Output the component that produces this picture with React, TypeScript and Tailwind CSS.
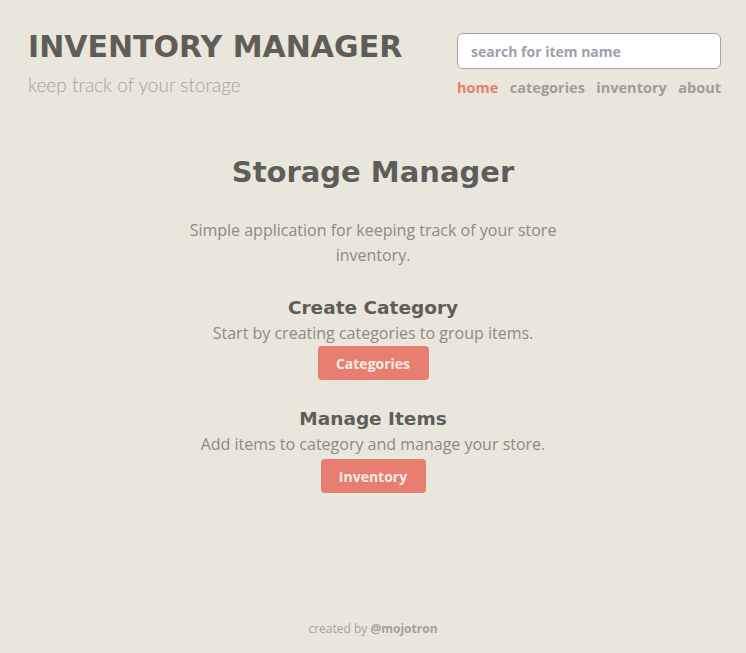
import React from "react";

const head = { fontFamily: '"DejaVu Sans", "Open Sans", sans-serif' };
const body = { fontFamily: '"Open Sans", Lato, sans-serif' };
const light = { fontFamily: 'Lato, "Open Sans", sans-serif' };

export default function App() {
  return (
    <div className="min-h-[653px] w-full bg-[#e9e6dc] flex flex-col" style={body}>
      <header className="flex justify-between pl-[28px] pr-[25px] pt-[28px]">
        <div>
          <h1 className="text-[30px] leading-[38px] font-bold text-[#5f5d58]" style={head}>
            INVENTORY MANAGER
          </h1>
          <p className="text-[19px] font-light text-[#a5a19a] mt-[7px] leading-[24px]" style={light}>keep track of your storage</p>
        </div>
        <div className="flex flex-col w-[264px] pt-[5px]">
          <input
            className="h-[36px] w-full rounded-[6px] border border-[#a5a29c] bg-white px-[13px] text-[14px] font-bold placeholder:text-[#9ba1ab] outline-none"
            placeholder="search for item name"
          />
          <nav className="flex justify-between mt-[8px] text-[14.5px] font-bold text-[#a09d97] leading-[22px]">
            <a className="text-[#e87e72]">home</a>
            <a>categories</a>
            <a>inventory</a>
            <a>about</a>
          </nav>
        </div>
      </header>
      <main className="flex flex-col items-center text-center mt-[53px] flex-1">
        <h2 className="text-[29px] font-bold text-[#5f5d58] leading-[40px]" style={head}>Storage Manager</h2>
        <p className="w-[390px] text-[16px] leading-[25px] text-[#8e8a84] mt-[26px]">
          Simple application for keeping track of your store inventory.
        </p>
        <h3 className="text-[18.5px] font-bold text-[#5f5d58] mt-[27px] leading-[26px]" style={head}>Create Category</h3>
        <p className="text-[16px] text-[#8e8a84] leading-[25px]">Start by creating categories to group items.</p>
        <button className="mt-[0px] h-[34px] w-[111px] rounded-[4px] bg-[#e87e72] text-[#f4ece4] text-[14px] font-bold">Categories</button>
        <h3 className="text-[18.5px] font-bold text-[#5f5d58] mt-[26px] leading-[26px]" style={head}>Manage Items</h3>
        <p className="text-[16px] text-[#8e8a84] leading-[25px]">Add items to category and manage your store.</p>
        <button className="mt-[2px] h-[34px] w-[105px] rounded-[4px] bg-[#e87e72] text-[#f4ece4] text-[14px] font-bold">Inventory</button>
      </main>
      <footer className="text-center text-[12px] text-[#a5a19a] pb-[15px]">
        created by <span className="font-bold">@mojotron</span>
      </footer>
    </div>
  );
}
